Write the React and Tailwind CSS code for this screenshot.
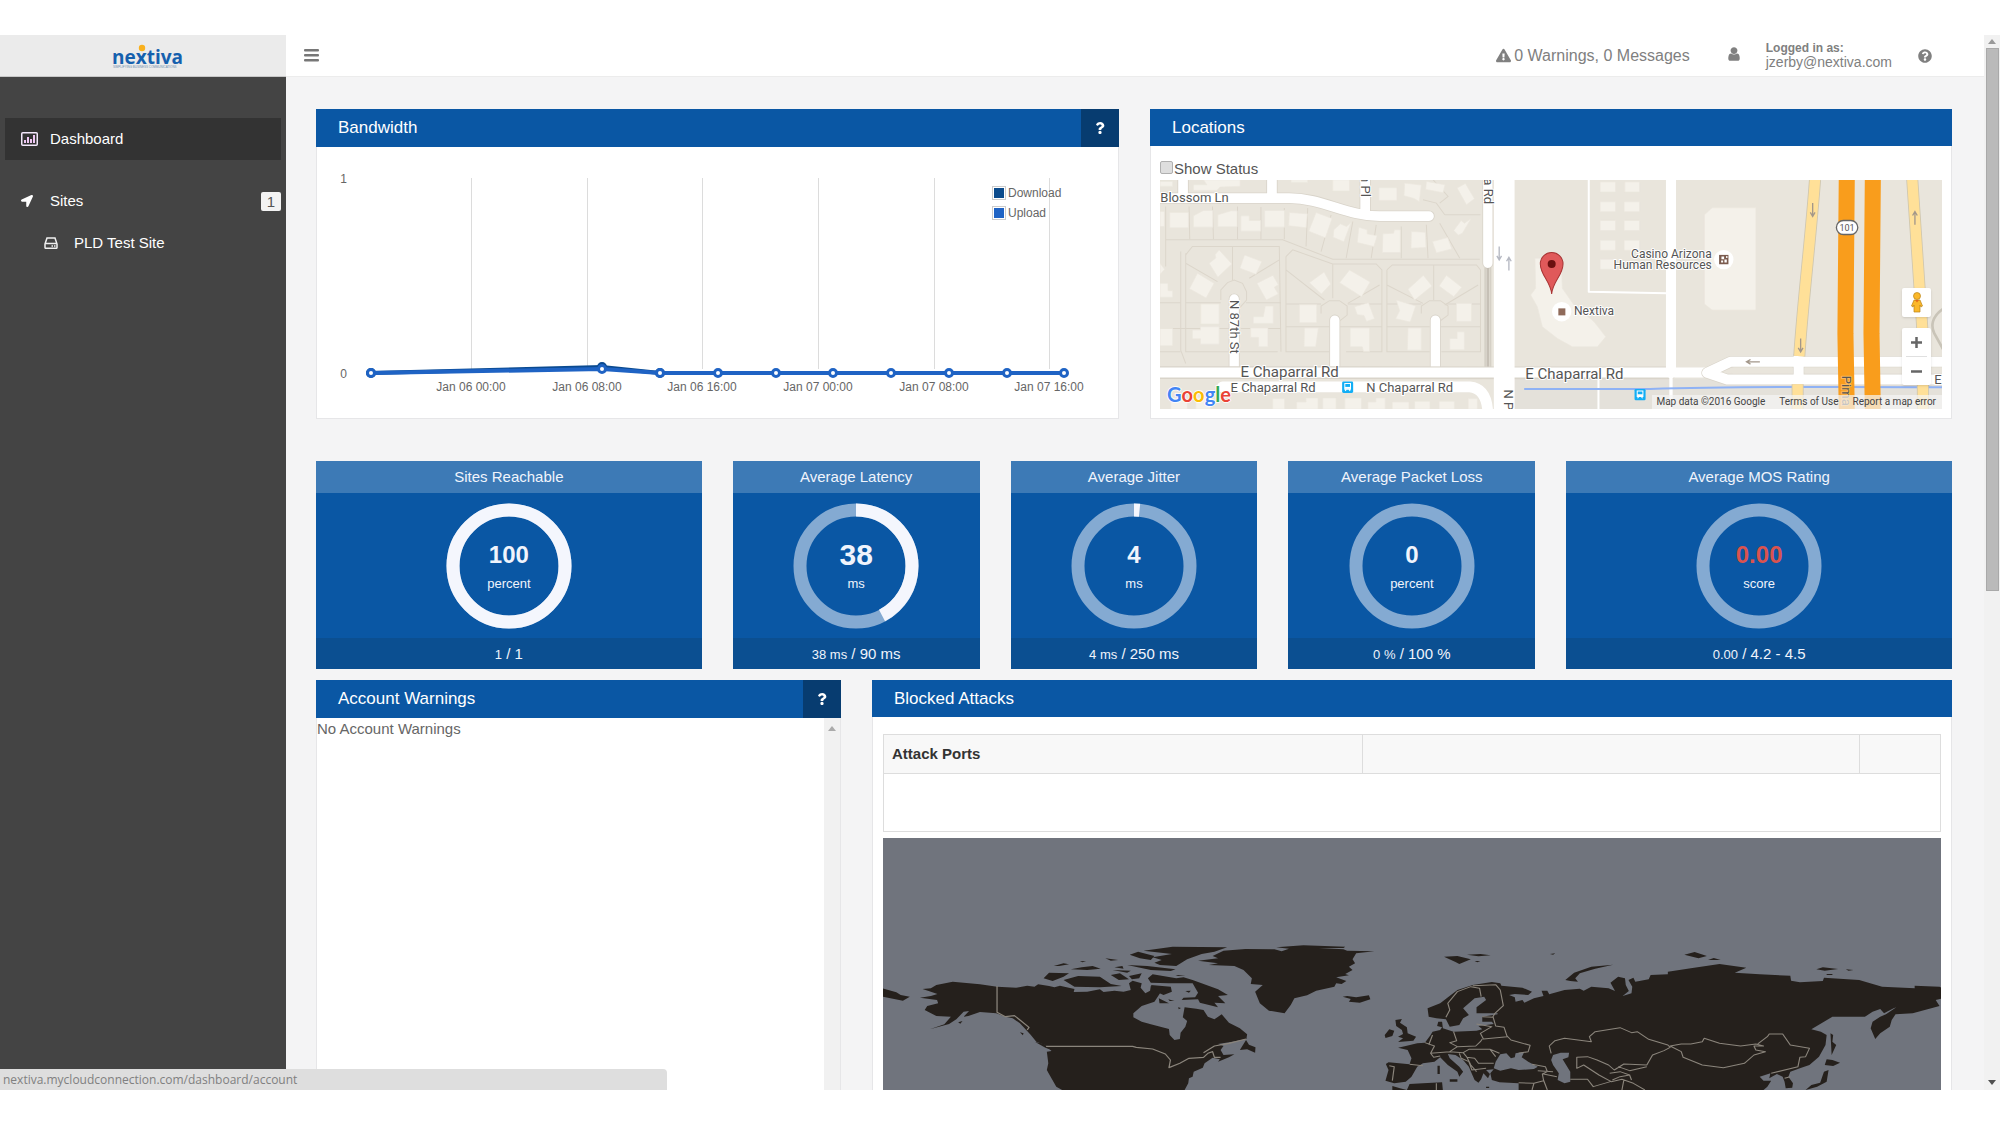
import { FaExclamationTriangle, FaLocationArrow, FaQuestion, FaQuestionCircle } from 'react-icons/fa';

const stats = [
  { title: 'Sites Reachable', value: '100', unit: 'percent', current: '1', limit: '1', fill: 1 },
  { title: 'Average Latency', value: '38', unit: 'ms', current: '38 ms', limit: '90 ms', fill: 38 / 90, big: true },
  { title: 'Average Jitter', value: '4', unit: 'ms', current: '4 ms', limit: '250 ms', fill: 4 / 250 },
  { title: 'Average Packet Loss', value: '0', unit: 'percent', current: '0 %', limit: '100 %', fill: 0 },
  { title: 'Average MOS Rating', value: '0.00', unit: 'score', current: '0.00', limit: '4.2 - 4.5', fill: 0, alert: true },
];

const ticks = [
  { x: 154, label: 'Jan 06 00:00' },
  { x: 270, label: 'Jan 06 08:00' },
  { x: 385, label: 'Jan 06 16:00' },
  { x: 501, label: 'Jan 07 00:00' },
  { x: 617, label: 'Jan 07 08:00' },
  { x: 732, label: 'Jan 07 16:00' },
];

const download = [[54, 226], [285, 220], [343, 226]];
const upload = [[54, 226], [285, 222], [343, 226], [401, 226], [459, 226], [516, 226], [574, 226], [632, 226], [690, 226], [747, 226]];

const BarsIcon = () => (
  <svg className="w-[15px] h-[13px]" viewBox="0 0 15 13" fill="#777">
    <rect y="0" width="15" height="2.5" rx="1" />
    <rect y="5" width="15" height="2.5" rx="1" />
    <rect y="10" width="15" height="2.5" rx="1" />
  </svg>
);

const UserIcon = () => (
  <svg className="w-[16px] h-[16px]" viewBox="0 0 1792 1792" fill="currentColor">
    <path d="M1536 1399q0 109-62.5 187t-150.5 78h-854q-88 0-150.5-78t-62.5-187q0-85 8.5-160.5t31.5-152 58.5-131 94-89 134.5-34.5q131 128 313 128t313-128q76 0 134.5 34.5t94 89 58.5 131 31.5 152 8.5 160.5zm-256-887q0 159-112.5 271.5t-271.5 112.5-271.5-112.5-112.5-271.5 112.5-271.5 271.5-112.5 271.5 112.5 112.5 271.5z" />
  </svg>
);

const ChartIcon = () => (
  <svg className="w-[17px] h-[14px]" viewBox="0 0 17 14">
    <rect x="0.75" y="0.75" width="15.5" height="12.5" rx="1" fill="none" stroke="#f3e8fb" strokeWidth="1.5" />
    <path d="M3 8h2v3H3zM6 5h2v6H6zM9 7h2v4H9zM12 3h2v8h-2z" fill="#f0c8f5" />
  </svg>
);

const HddIcon = () => (
  <svg className="w-[14px] h-[12px]" viewBox="0 0 14 12" fill="none" stroke="#f0f0f0" strokeWidth="1.5">
    <path d="M1 7 3 1h8l2 6v3.5a.8.8 0 0 1-.8.8H1.800a.8.8 0 0 1-.8-.8zM1 6.500h12" />
    <path d="M7.500 9h1.500M10 9h1.500" />
  </svg>
);

const Logo = () => (
  <svg className="w-[76px] h-[26px]" viewBox="0 0 76 26">
    <text x="1" y="20" fontFamily="Open Sans, sans-serif" fontSize="19" fontWeight="700" fill="#1560ae">nextiva</text>
    <circle cx="31" cy="4" r="3.2" fill="#f9b11e" />
    <text x="2" y="24" fontFamily="Liberation Sans, sans-serif" fontSize="3" fill="#6f8fae">SIMPLIFYING BUSINESS COMMUNICATIONS</text>
  </svg>
);

const Panel = ({ title, help, children, className = '' }) => (
  <section className={`bg-white border-x border-b border-[#e6e6e8] flex flex-col ${className}`}>
    <div className="-mx-px flex bg-[#0a57a4] text-white">
      <h2 className={`flex-1 pl-[22px] text-[17px] ${help ? 'leading-[38px]' : 'leading-[37px]'}`}>{title}</h2>
      {help && (
        <button aria-label={`${title} help`} className="w-[38px] flex items-center justify-center bg-[#073c70]">
          <FaQuestion className="w-[12px] h-[12px]" />
        </button>
      )}
    </div>
    {children}
  </section>
);

const BandwidthChart = () => (
  <svg className="w-full h-auto" viewBox="0 0 801 271" fontFamily="Liberation Sans, Arial, sans-serif" fontSize="12" fill="#666">
    {ticks.map((t) => (
      <g key={t.label}>
        <path d={`M${t.x}.5 31V222`} stroke="#dcdcdc" />
        <text x={t.x} y="244" textAnchor="middle">{t.label}</text>
      </g>
    ))}
    <text x="30" y="36" textAnchor="end">1</text>
    <text x="30" y="231" textAnchor="end">0</text>
    <polyline points={download.join(' ')} fill="none" stroke="#0a4a90" strokeWidth="4" />
    {download.map(([x, y]) => <circle key={x} cx={x} cy={y} r="3.5" fill="#fff" stroke="#0a4a90" strokeWidth="3" />)}
    <polyline points={upload.join(' ')} fill="none" stroke="#1f63c4" strokeWidth="4" />
    {upload.map(([x, y]) => <circle key={x} cx={x} cy={y} r="3.5" fill="#fff" stroke="#1f63c4" strokeWidth="3" />)}
    <rect x="675.5" y="39.500" width="13" height="13" fill="#fff" stroke="#ccc" />
    <rect x="677" y="41" width="10" height="10" fill="#0b4b8c" />
    <text x="691" y="50">Download</text>
    <rect x="675.5" y="59.500" width="13" height="13" fill="#fff" stroke="#ccc" />
    <rect x="677" y="61" width="10" height="10" fill="#1f63c4" />
    <text x="691" y="70">Upload</text>
  </svg>
);

const StreetMap = () => (
  <svg className="w-full h-[229px]" viewBox="33 240 2340 687" preserveAspectRatio="xMidYMid slice" fontFamily="Roboto, sans-serif" fill="#555">
    <rect x="33" y="240" width="2345" height="687" fill="#e9e5dc" />
    <path d="M1095 835H2375V927H1095Z" fill="#e4e1da" />
    {/* parcel lines */}
    <g fill="none" stroke="#dcd6cb" strokeWidth="3">
      <path d="M50 320V420H400L550 478H990M50 420V500M95 455V750L110 790M110 460V755H385M110 465 130 440H390L395 755M110 490 205 545M250 440V540M390 480 300 535M410 470V755H540M410 470 430 450 550 492H680L697 510V755H590M410 510 525 600M550 492V595M690 555 595 610M712 510V755H840M712 510 728 495H980L992 510V755H875M712 555 820 610M852 495V600M985 555 885 615" />
      <path d="M110 608H215M290 608H395M410 612H515M595 612H697M712 612H815M890 612H992M33 685H240M275 685H395M410 680H540M572 680H697M712 680H840M872 680H992M33 608H95M33 755H95" />
      <path d="M215 600V570L235 548 255 540 280 550 292 575V600L270 625M515 640V618L540 602H570L593 618V645L572 662M815 640V618L840 602H872L895 618V645L872 662" />
      <path d="M120 320 122 418M190 320 193 418M265 320V418M335 322V418M405 325V418M475 325 470 440M545 345 515 455M610 365 590 475M680 375 665 475M755 380V475M830 375 835 475M870 370 930 475M885 345H992M870 310 895 290 850 240M885 345 860 310 820 300" />
    </g>
    {/* houses */}
    <g fill="#f4f1ea" stroke="#ebe7de" strokeWidth="2">
      <path d="M33 335h13v45H33zM62 338h56v46H62zM133 348l30-16h28v50h-58zM206 345l40-12h18v48h-58zM275 348h25v14h34v32h-59zM346 332h60v50h-60zM420 338l54 4-4 42-52-6zM500 338l48 18-20 58-50-20zM553 390l20-18 18 8 14-12-22 58-32-14zM628 382l25 8v12l30 6-10 32-50-12zM700 402l32-2 2-10h18v68h-54zM785 395l42 2 2 46-45 2zM848 425l46-12 12 34-46 12zM688 264h54v38h-54zM765 250l50 6-6 50-16-10-30-8zM830 245l56 10-6 24-52-10zM922 265l25-14 27 46-24 18zM912 392l22-30 10 8 20-14-26 44-12 6zM133 255h40l-10-15h110v20l-60 2-10 10h-70zM33 245h38v15H33zM425 240h50v8h-50zM550 240h50v34h-50z" />
      <path d="M180 490l20-16-2-10 12-14 38 42-42 40zM286 465l52 20-18 38-48-18zM145 520l50 30-24 44-50-28zM323 550l48-24 16 28-12 8 12 20-36 18zM480 548l44-32 20 36-28 30zM600 510l62 36-26 44-66-42zM775 568l46-42 26 32-52 42zM890 526l46 36-24 28-44-32zM155 612h55v60h-55zM348 618h24v52h-60v-20h30zM450 614h52v54h-52zM615 620l42-12 18 48-24 8-8-18-20-2zM740 600l58 18-16 48-44-10 12-24zM920 610h45v54h-45zM130 690h24v-10h56v52h-56v-16h-24zM304 684h52v56h-28v-28h-24zM465 684h42l-8 56h-35zM602 684h58v70h-18l-4-14h-36zM775 684h40v66h-42zM900 715h22v-20h22v54h-44zM33 490l14 18-14 16zM33 550h24v22h14v20H33zM33 685h38v52H33z" />
      <path d="M65 892h50v35H65zM140 892h44v35h-44zM370 895h36v32h-36zM442 905h28v-12h36v34h-64zM520 893h40v34h-40zM586 893h50v34h-50zM655 905h24v-12h28v34h-52zM728 905h50v22h-50zM795 903h46v24h-46zM868 903h46v24h-46zM955 895h28v32h-28z" />
      <path d="M1155 475h35l45 40 2 50 35 50 60 50 35 45-25 30h-75l-45-25-45-35-15-60-20-35 15-20z" />
      <path d="M1350 247h46v30h-46zM1424 247h44v30h-44zM1350 306h46v30h-46zM1422 306h46v30h-46zM1350 362h46v30h-46zM1422 362h46v30h-46zM1350 421h46v30h-46zM1422 421h46v30h-46zM1350 478h46v30h-46z" />
      <path d="M1685 324H1816V630H1685L1662 612V345Z" />
    </g>
    {/* local roads */}
    <g fill="none" strokeLinejoin="round" strokeLinecap="round">
      <path d="M1316 240V575L1550 580M1345 835V927" stroke="#fff" strokeWidth="6" />
      <path d="M20 295H420C520 295 590 349 690 349H838M647 240V340M368 230V290M102 230V290" stroke="#d9d4ca" strokeWidth="34" />
      <path d="M255 597V810M556 660V810M857 660V810M1014 230V490" stroke="#d9d4ca" strokeWidth="33" />
      <path d="M1006 505V800M1022 505V800" stroke="#d5d0c6" strokeWidth="5" />
      <path d="M1014 505V800" stroke="#c6c0b6" strokeWidth="8" />
      <path d="M20 295H420C520 295 590 349 690 349H838M647 240V340M368 230V290M102 230V290" stroke="#fff" strokeWidth="29" />
      <path d="M255 597V810M556 660V810M857 660V810M1014 230V490" stroke="#fff" strokeWidth="28" />
      <path d="M20 817H540L1062 818H1560" stroke="#d9d4ca" strokeWidth="38" />
      <path d="M220 860H960Q1012 865 1014 940" stroke="#fff" strokeWidth="32" />
      <path d="M1063 230V940" stroke="#fff" strokeWidth="62" />
      <path d="M20 817H1690M1562 230V820" stroke="#fff" strokeWidth="30" />
      <path d="M1562 820V927" stroke="#fff" strokeWidth="10" />
      <path d="M1670 818 1740 785H2380M1670 818 1730 838H2380M1944 770V840" stroke="#d9d4ca" strokeWidth="34" />
      <path d="M1670 818 1740 785H2380M1670 818 1730 838H2380M1944 770V840" stroke="#fff" strokeWidth="30" />
      <path d="M1730 812 1750 802H1924V816L1750 820ZM1962 802H2380V816H1962Z" fill="#e9e5dc" />
      <path d="M1125 866H1500Q1760 858 2375 861" stroke="#8fb2f5" strokeWidth="6" />
    </g>
    {/* highway */}
    <g fill="none">
      <path d="M1993 240C1980 420 1955 620 1946 768M1941 852V927M2284 240C2292 380 2305 540 2315 700L2316 927" stroke="#cfc6ae" strokeWidth="36" />
      <path d="M1993 240C1980 420 1955 620 1946 768M1941 852V927M2284 240C2292 380 2305 540 2315 700L2316 927" stroke="#ffe098" strokeWidth="31" />
      <path d="M2088 240 2084 700 2088 927M2166 240 2162 700 2166 927" stroke="#f99d1c" strokeWidth="48" />
      <path d="M2378 625C2340 650 2340 680 2350 700L2378 750" stroke="#c9c4b8" strokeWidth="8" />
    </g>
    <g fill="none" stroke="#a3978a" strokeWidth="4">
      <path d="M1986 310V350M1979 338 1986 350 1993 338M1950 715V755M1943 743 1950 755 1957 743M2292 375V335M2285 347 2292 335 2299 347M1828 785H1790M1800 778 1788 785 1800 792" />
      <path d="M1048 440V480M1041 468 1048 480 1055 468M1077 512V472M1070 484 1077 472 1084 484" stroke="#b5b8c2" />
    </g>
    <rect x="2057" y="362" width="64" height="42" rx="21" fill="#fff" stroke="#666" strokeWidth="4" />
    <text x="2089" y="392" fontSize="27" textAnchor="middle">101</text>
    {/* street names */}
    <g stroke="#fff" strokeWidth="6" paintOrder="stroke" strokeLinejoin="round">
      <g fontSize="39">
        <text x="34" y="306">Blossom Ln</text>
        <text x="244" y="875">E Chaparral Rd</text>
        <text x="650" y="876">N Chaparral Rd</text>
        <text transform="translate(242 600) rotate(90)">N 87th St</text>
        <text transform="translate(635 226) rotate(90)">n Pl</text>
        <text transform="translate(1002 236) rotate(90)">a Rd</text>
        <text transform="translate(1062 868) rotate(90)">N P</text>
        <text transform="translate(2073 827) rotate(90)" stroke="#f9b95a">Pima</text>
      </g>
      <text x="274" y="830" fontSize="45">E Chaparral Rd</text>
      <text x="1126" y="835" fontSize="45">E Chaparral Rd</text>
      <text x="2350" y="852" fontSize="39">E</text>
      <g fontSize="36">
        <text x="1684" y="474" textAnchor="end">Casino Arizona</text>
        <text x="1684" y="508" textAnchor="end">Human Resources</text>
        <text x="1272" y="646">Nextiva</text>
      </g>
    </g>
    {/* points of interest */}
    <circle cx="1235" cy="635" r="29" fill="#fff" />
    <rect x="1225" y="625" width="21" height="21" fill="#8f6a5a" />
    <circle cx="1720" cy="479" r="29" fill="#fff" />
    <path d="M1706 465h28v28h-28z" fill="#7b5b4e" />
    <path d="M1713 470h8v8h-8zM1722 479h7v9h-7zM1712 482h6v6h-6zM1727 468h4v6h-4z" fill="#fff" />
    {[[578, 844], [1453, 866]].map(([x, y]) => (
      <g key={x} transform={`translate(${x} ${y})`}>
        <rect width="33" height="34" rx="4" fill="#12aef5" />
        <path d="M8 6h17v17H8zM9 28l3-4M24 28l-3-4" fill="#12aef5" stroke="#fff" strokeWidth="3" />
        <path d="M8 16h17v6H8z" fill="#fff" />
      </g>
    ))}
    <path d="M1205 582C1202 545 1171 525 1171 492a34 34 0 0 1 68 0C1239 525 1208 545 1205 582Z" fill="#e0595a" stroke="#a83434" strokeWidth="3" />
    <circle cx="1205" cy="492" r="12" fill="#6b1010" />
    <text x="54" y="905" fontFamily="Lato, sans-serif" fontSize="60" fontWeight="700" stroke="#fff" strokeWidth="5" paintOrder="stroke">
      <tspan fill="#4285f4">G</tspan><tspan fill="#ea4335">o</tspan><tspan fill="#fbbc05">o</tspan><tspan fill="#4285f4">g</tspan><tspan fill="#34a853">l</tspan><tspan fill="#ea4335">e</tspan>
    </text>
  </svg>
);

const Locations = () => (
  <Panel title="Locations">
    <div className="flex-1 pt-3 px-[9px] pb-[9px]">
      <label className="flex items-center h-[22px] text-[15px] leading-[22px] text-[#555]">
        <input type="checkbox" className="appearance-none w-[13px] h-[13px] mr-px mb-1 rounded-xs border border-[#b0b0b0] bg-[#dedede]" />
        Show Status
      </label>
      <div className="relative overflow-hidden font-[Roboto,sans-serif]">
        <StreetMap />
        <div className="absolute right-0 bottom-0 h-[14px] pl-1 pr-[6px] flex gap-[14px] bg-[#f5f5f5]/70 text-[10px] leading-[14px] text-[#444]">
          <span>Map data ©2016 Google</span>
          <a href="#terms">Terms of Use</a>
          <a href="#report">Report a map error</a>
        </div>
        <div className="absolute right-[11px] bottom-6 w-[29px] flex flex-col gap-[11px] text-[#666]">
          <button aria-label="Street View" className="h-[29px] flex items-center justify-center bg-white rounded-xs shadow-sm">
            <svg className="w-[12px] h-[21px]" viewBox="0 0 12 21" fill="#fbb829" stroke="#b98318" strokeWidth="0.7">
              <path d="M3 8h6l2.500 6-1.500 1-1-2v7H3v-7l-1 2-1.500-1z" />
              <circle cx="6" cy="4" r="3.500" />
              <path d="M4 8l2 2.500L8 8z" fill="#e26a1c" stroke="none" />
            </svg>
          </button>
          <div className="flex flex-col bg-white rounded-xs shadow-sm">
            <button aria-label="Zoom in" className="h-[28px] flex items-center justify-center">
              <svg className="w-[11px] h-[11px]" viewBox="0 0 11 11" stroke="currentColor" strokeWidth="2.500"><path d="M0 5.500h11M5.500 0v11" /></svg>
            </button>
            <div className="mx-1 border-t border-[#e0e0e0]" />
            <button aria-label="Zoom out" className="h-[28px] flex items-center justify-center">
              <svg className="w-[11px] h-[11px]" viewBox="0 0 11 11" stroke="currentColor" strokeWidth="2.500"><path d="M0 5.500h11" /></svg>
            </button>
          </div>
        </div>
      </div>
    </div>
  </Panel>
);

const StatCard = ({ stat }) => {
  const length = 2 * Math.PI * 56;
  return (
    <section className="bg-[#0a57a4] text-[#f0f4fc] text-center">
      <h3 className="h-8 text-[15px] leading-[31px] bg-[#3d7ab6]">{stat.title}</h3>
      <div className="h-[145px] grid place-items-center">
        <svg className="col-start-1 row-start-1 w-[126px] h-[126px] -rotate-90" viewBox="0 0 126 126" fill="none" strokeWidth="13">
          <circle cx="63" cy="63" r="56" stroke="#84aad2" />
          {stat.fill > 0 && <circle cx="63" cy="63" r="56" stroke="#f4f6fd" strokeDasharray={`${length * stat.fill} ${length}`} />}
        </svg>
        <div className="col-start-1 row-start-1 pt-1">
          <p className={`font-bold leading-8 ${stat.big ? 'text-[30px]' : 'text-2xl'} ${stat.alert ? 'text-[#d9534f]' : ''}`}>{stat.value}</p>
          <p className="text-[13px] leading-[26px]">{stat.unit}</p>
        </div>
      </div>
      <p className="h-[31px] text-[15px] leading-[31px] bg-[#0b4f91]">
        <span className="text-[13px]">{stat.current}</span> / {stat.limit}
      </p>
    </section>
  );
};

const WorldMap = () => (
  <svg className="w-full" viewBox="0 0 1058 500" strokeLinejoin="round">
    <rect width="1058" height="500" fill="#70747d" />
    {/* Americas */}
    <g transform="translate(-23 82) scale(.3635 .3333)">
      <g fill="#25201c">
        <path d="M165 233 195 228 213 222 195 215 172 207 195 205 210 195 255 185 330 193 377 200 430 203 460 197 480 200 490 193 520 198 535 202 550 197 590 207 588 216 625 215 660 208 670 216 700 212 725 215 745 210 740 190 750 182 775 190 772 203 785 220 798 212 800 198 825 200 828 215 810 245 775 258 752 280 752 292 775 305 800 313 850 327 852 345 865 360 880 357 882 338 895 320 900 303 888 292 893 262 925 266 945 270 957 290 975 298 995 283 1015 308 1045 325 1065 343 1063 357 1020 366 985 372 1000 378 992 390 1000 405 1030 403 1015 412 985 425 990 418 970 413 948 430 943 443 918 455 915 470 905 475 903 490 893 510 893 700 700 820 600 700 556 510 540 500 520 462 514 450 518 430 514 395 527 393 510 375 485 365 470 345 440 310 420 295 400 290 375 280 330 276 298 288 285 290 300 273 285 275 265 298 245 312 192 328 232 313 250 290 210 288 178 270 185 258 215 250 212 240Z" />
        <path d="M62 205 100 217 112 225 137 230 118 242 62 230ZM270 307l12-4-6 8ZM440 337l10 3-2 6ZM482 366l24 5 22 20-18-8ZM1062 360 1045 390 1065 388 1087 398 1088 382 1070 374Z" />
        <path d="M505 175 520 158 575 160 560 170 530 183ZM560 180 600 168 660 170 690 192 720 198 660 202 590 200ZM533 138 560 130 575 133 548 138ZM580 148 610 142 640 138 662 146 625 150ZM675 115 710 120 690 122ZM605 124 622 123 612 127ZM700 142 722 138 725 146ZM742 104 765 95 810 108 800 120 770 115ZM780 92 860 80 1010 82 975 95 940 102 900 118 870 138 825 135 810 128 830 120 805 112 858 102ZM735 135 790 138 868 148 855 153 800 150ZM690 165 715 160 740 178 712 180ZM695 150 745 152 735 158ZM740 168 775 160 768 175 748 178ZM792 175 805 163 870 175 890 172 915 180 985 208 1012 225 985 228 1005 250 975 248 985 262 935 248 930 238 885 240 890 233 922 232 930 218 915 190 850 190 800 188ZM800 195 855 200 858 215 835 225 815 215ZM868 165 895 166 875 168ZM895 213 910 212 905 218ZM822 235 850 250 824 250ZM848 238 865 243 852 243ZM875 262l8 2-6 4Z" />
        <path d="M930 122 985 115 970 108 1000 92 1060 87 1140 88 1160 94 1180 86 1145 82 1220 76 1335 80 1330 84 1262 84 1330 88 1340 92 1415 94 1365 100 1355 118 1362 130 1345 140 1355 150 1335 162 1345 166 1310 172 1338 183 1325 192 1310 190 1305 200 1255 212 1230 226 1195 235 1185 255 1168 280 1125 272 1100 250 1087 215 1108 195 1075 192 1078 175 1055 150 1030 138 960 135 985 130Z" />
        <path d="M1328 230 1340 228 1365 232 1400 226 1404 238 1375 248 1345 245 1350 237Z" />
      </g>
      <path d="M377 198V277L400 290 425 287 440 300 465 322 460 330M512 379H750L760 382 805 387 840 402 854 420 850 443 880 430 905 415 945 412 957 400 970 395 975 412 992 412M945 398 975 378 1015 370 1062 357" fill="none" stroke="#8b857c" strokeWidth="3.500" />
    </g>
    {/* Eurasia */}
    <g transform="translate(517 82) scale(.38265 .3333)">
      <g fill="#25201c">
        <path d="M72 265 105 250 150 210 190 195 240 186 262 190 265 197 320 203 345 215 335 225 300 222 285 225 300 232 302 245 320 240 325 248 350 235 375 228 370 212 385 212 390 223 430 210 470 206 480 212 500 200 545 205 562 213 550 188 570 170 588 175 590 195 598 213 582 228 605 220 607 200 597 180 610 173 615 185 650 178 655 165 700 163 700 155 760 145 835 132 905 143 875 158 940 163 1020 167 1022 182 1045 187 1105 183 1108 173 1200 180 1260 200 1345 205 1345 197 1410 200 1418 205V235L1400 240 1410 258 1340 280 1295 283 1285 300 1280 320 1255 340 1242 357 1230 325 1235 305 1255 290 1270 283 1297 262 1290 265 1265 280 1255 267 1235 275 1215 290 1130 290 1075 328 1100 335 1115 345 1112 375 1095 410 1070 435 1045 445 1020 455 1015 470 1027 490 1025 503 1008 505 1005 485 1000 470 985 462 965 475 968 460 940 470 950 482 970 482 960 500 950 510 950 800H310V490L285 488 260 487 240 480 236 460 245 448 225 450 235 462 230 475 218 460 212 478 205 488 195 480 188 462 180 440 165 420 145 405 125 402 130 415 155 440 165 455 155 470 150 455 125 435 105 412 90 425 60 430 45 440 30 470 15 485-15 490-38 482-30 450-37 432-30 427 25 433 30 415 20 390-5 383 15 378 45 370 65 368 80 345 85 335 105 330 110 322 97 318 100 305 110 305 112 325 140 335 200 332 215 328 205 318 245 312 240 305 215 305 215 290 255 283 255 280 200 280 200 262 225 240 220 230 195 235 165 265 180 285 165 295 155 315 130 320 120 298 95 295 75 290Z" />
        <path d="M-12 300 5 297 0 308 18 322 20 340 42 350 35 362-5 366 8 355-5 350 8 342 5 330-10 318ZM-40 345-28 328-15 332-20 348-38 354ZM98 437h6v25h-6ZM130 478h20v7h-20ZM18 510 25 492 60 490 110 487 112 510V700H-20V498L0 505ZM225 500h8v4h-8Z" />
        <path d="M115 110 150 108 185 118 155 132 145 126ZM175 104 210 102 237 106 205 109ZM195 123l15 0-8 4ZM392 102l14-2-6 4ZM432 180 455 158 500 140 557 134 510 146 470 160 458 175 465 185 445 183ZM743 104 770 96 802 108 780 115ZM805 120 820 114 838 120ZM1088 148 1105 142 1145 147 1110 152ZM1115 162h15v3h-15ZM1165 148 1185 150 1172 152Z" />
        <path d="M1125 340 1132 345 1130 365 1140 375 1128 405ZM1115 418 1130 420 1150 428 1132 438 1110 435ZM1108 455 1120 450 1115 485 1090 500 1060 510 1075 495 1098 488Z" />
      </g>
      <g fill="#70747d">
        <path d="M245 445 250 425 262 403 278 400 290 415 300 412 302 400 325 395 318 412 335 425 360 440 350 447 310 450 290 445 262 452Z" />
        <path d="M395 420 400 405 420 398 442 398 440 412 425 418 445 455 445 485 430 490 412 480 415 460 400 435Z" />
      </g>
      <g fill="none" stroke="#8b857c" strokeWidth="3">
        <path d="M395 400 390 378 405 362 430 355 500 365 495 350 510 335 575 323 605 338 620 335 650 358 700 375 706 382 690 392 660 405 645 435 585 432 560 450 545 435 515 420 490 410 462 412V445L480 435 520 465 552 485 580 478 610 490 640 510M548 460 575 455 600 465 575 470 555 480M445 478 490 478 505 500 550 485M585 480 580 510M570 440 600 452 645 440M600 465 605 480" />
        <path d="M706 378 735 372 760 372 790 365 795 355 835 370 890 378 930 372 950 378 925 378 930 390 955 395 925 405 900 430 845 443 790 435 740 412 735 395ZM935 372 960 350 965 342 1000 342 1020 375 1070 385 1060 410 1045 412 1040 440 970 460M1005 475 1020 470" />
        <path d="M120 292 130 270 125 250 150 215 185 200 208 205 212 230M190 197 250 194 262 210 270 257 248 280 243 290 250 318 272 322 280 350 218 357 210 340 240 320 200 312M215 290 243 292M140 335 148 362 130 368 150 380 198 378 210 365 215 357M280 348 290 360 340 376 335 395 310 400M65 368 90 378 80 400 88 412 105 408M80 400 130 395 150 380M85 345 75 375M130 395 165 398 180 388 235 388 260 400M165 398 175 412 195 415 205 430 245 430M155 400 160 415 180 425 188 450 225 445M175 412 185 435 200 455M25 433 60 437M-28 437-15 440-20 482M95 490V510M235 388 250 410M345 433 380 440 385 455 372 462 375 480 385 510M310 488 350 490 375 482M350 490 345 510M360 452 400 455M375 462 410 470" />
      </g>
    </g>
  </svg>
);

const Scrollbar = () => (
  <div className="w-4 shrink-0 flex flex-col items-center bg-[#f1f1f1]">
    <button aria-label="Scroll up" className="h-[13px] flex items-center">
      <svg className="w-[8px] h-[5px]" viewBox="0 0 8 5" fill="#999"><path d="M0 5 4 0 8 5Z" /></svg>
    </button>
    <div className="w-[13px] h-[543px] bg-[#bababa] border border-[#a9a9a9]" />
    <button aria-label="Scroll down" className="mt-auto h-4 flex items-center">
      <svg className="w-[8px] h-[5px]" viewBox="0 0 8 5" fill="#505050"><path d="M0 0 4 5 8 0Z" /></svg>
    </button>
  </div>
);

const App = () => {
  return (
    <div className="h-screen py-[35px] bg-white overflow-hidden font-['Liberation_Sans',Arial,sans-serif] text-[#666]">
      <div className="relative h-full flex overflow-hidden">
        {/* Sidebar */}
        <aside className="w-[286px] shrink-0 bg-[#444] text-[15px] text-white">
          <div className="h-[42px] pt-[9px] pl-[11px] flex justify-center bg-[#ebebeb] border-b border-[#c8c8c8]">
            <Logo />
          </div>
          <nav className="pt-[41px] px-[5px]">
            <a href="#dashboard" className="h-[42px] pl-4 flex items-center bg-[#333]">
              <span className="w-[29px]"><ChartIcon /></span>
              Dashboard
            </a>
            <a href="#sites" className="h-[42px] mt-5 pl-4 flex items-center">
              <span className="w-[29px]"><FaLocationArrow className="w-[12px] h-[12px]" /></span>
              <span className="flex-1">Sites</span>
              <span className="w-5 h-[19px] text-center leading-[19px] rounded-xs bg-[#f3f3f3] text-[#555]">1</span>
            </a>
            <a href="#pld" className="h-[42px] pl-[39px] flex items-center">
              <span className="w-[30px]"><HddIcon /></span>
              PLD Test Site
            </a>
          </nav>
        </aside>

        <div className="flex-1 min-w-0 flex flex-col bg-[#f4f4f5]">
          <header className="h-[42px] shrink-0 pl-[18px] pr-[52px] flex items-center bg-white border-b border-[#ececec] text-[#808080]">
            <button aria-label="Toggle menu"><BarsIcon /></button>
            <a href="#warnings" className="ml-auto flex items-center gap-[3px] text-base">
              <FaExclamationTriangle className="w-[15px] h-[15px]" />
              0 Warnings, 0 Messages
            </a>
            <span className="ml-9 pb-1"><UserIcon /></span>
            <div className="ml-6 pb-0.5 text-sm leading-[14px]">
              <p className="text-xs leading-[14px] font-bold">Logged in as:</p>
              <p>jzerby@nextiva.com</p>
            </div>
            <button aria-label="Help" className="ml-[26px]"><FaQuestionCircle className="w-[14px] h-[14px]" /></button>
          </header>

          <main className="flex-1 min-h-0 overflow-hidden pt-8 pl-[30px] pr-8">
            <div className="grid grid-cols-[803fr_802fr] gap-[31px]">
              <Panel title="Bandwidth" help>
                <BandwidthChart />
              </Panel>
              <Locations />
            </div>

            <div className="mt-[42px] grid grid-cols-[386fr_247fr_247fr_247fr_386fr] gap-[31px]">
              {stats.map((s) => <StatCard key={s.title} stat={s} />)}
            </div>

            <div className="mt-[11px] grid grid-cols-[525fr_1080fr] gap-[31px]">
              <Panel title="Account Warnings" help>
                <div className="flex-1 flex">
                  <p className="flex-1 text-[15px] leading-[22px]">No Account Warnings</p>
                  <div className="w-4 pt-2 flex justify-center bg-[#f1f1f1]">
                    <svg className="w-[8px] h-[5px]" viewBox="0 0 8 5" fill="#aaa"><path d="M0 5 4 0 8 5Z" /></svg>
                  </div>
                </div>
              </Panel>
              <Panel title="Blocked Attacks">
                <div className="pt-[17px] px-[10px]">
                  <table className="w-full table-fixed border-collapse border border-[#ddd] text-[15px]">
                    <colgroup>
                      <col />
                      <col className="w-[47%]" />
                      <col className="w-[81px]" />
                    </colgroup>
                    <thead className="bg-[#f8f8f8] text-[#333]">
                      <tr className="h-[39px] text-left">
                        <th className="pl-2 border border-[#ddd]">Attack Ports</th>
                        <th className="border border-[#ddd]" />
                        <th className="border border-[#ddd]" />
                      </tr>
                    </thead>
                    <tbody>
                      <tr className="h-[58px]"><td colSpan={3} /></tr>
                    </tbody>
                  </table>
                  <div className="mt-[6px]"><WorldMap /></div>
                </div>
              </Panel>
            </div>
          </main>
        </div>

        <Scrollbar />

        {/* Link status bubble */}
        <div className="absolute left-0 bottom-0 w-1/3 h-[21px] pl-[3px] rounded-tr bg-[#dedede] font-['Open_Sans',sans-serif] text-xs leading-[22px] text-[#808080]">
          nextiva.mycloudconnection.com/dashboard/account
        </div>
      </div>
    </div>
  );
};

export default App;
